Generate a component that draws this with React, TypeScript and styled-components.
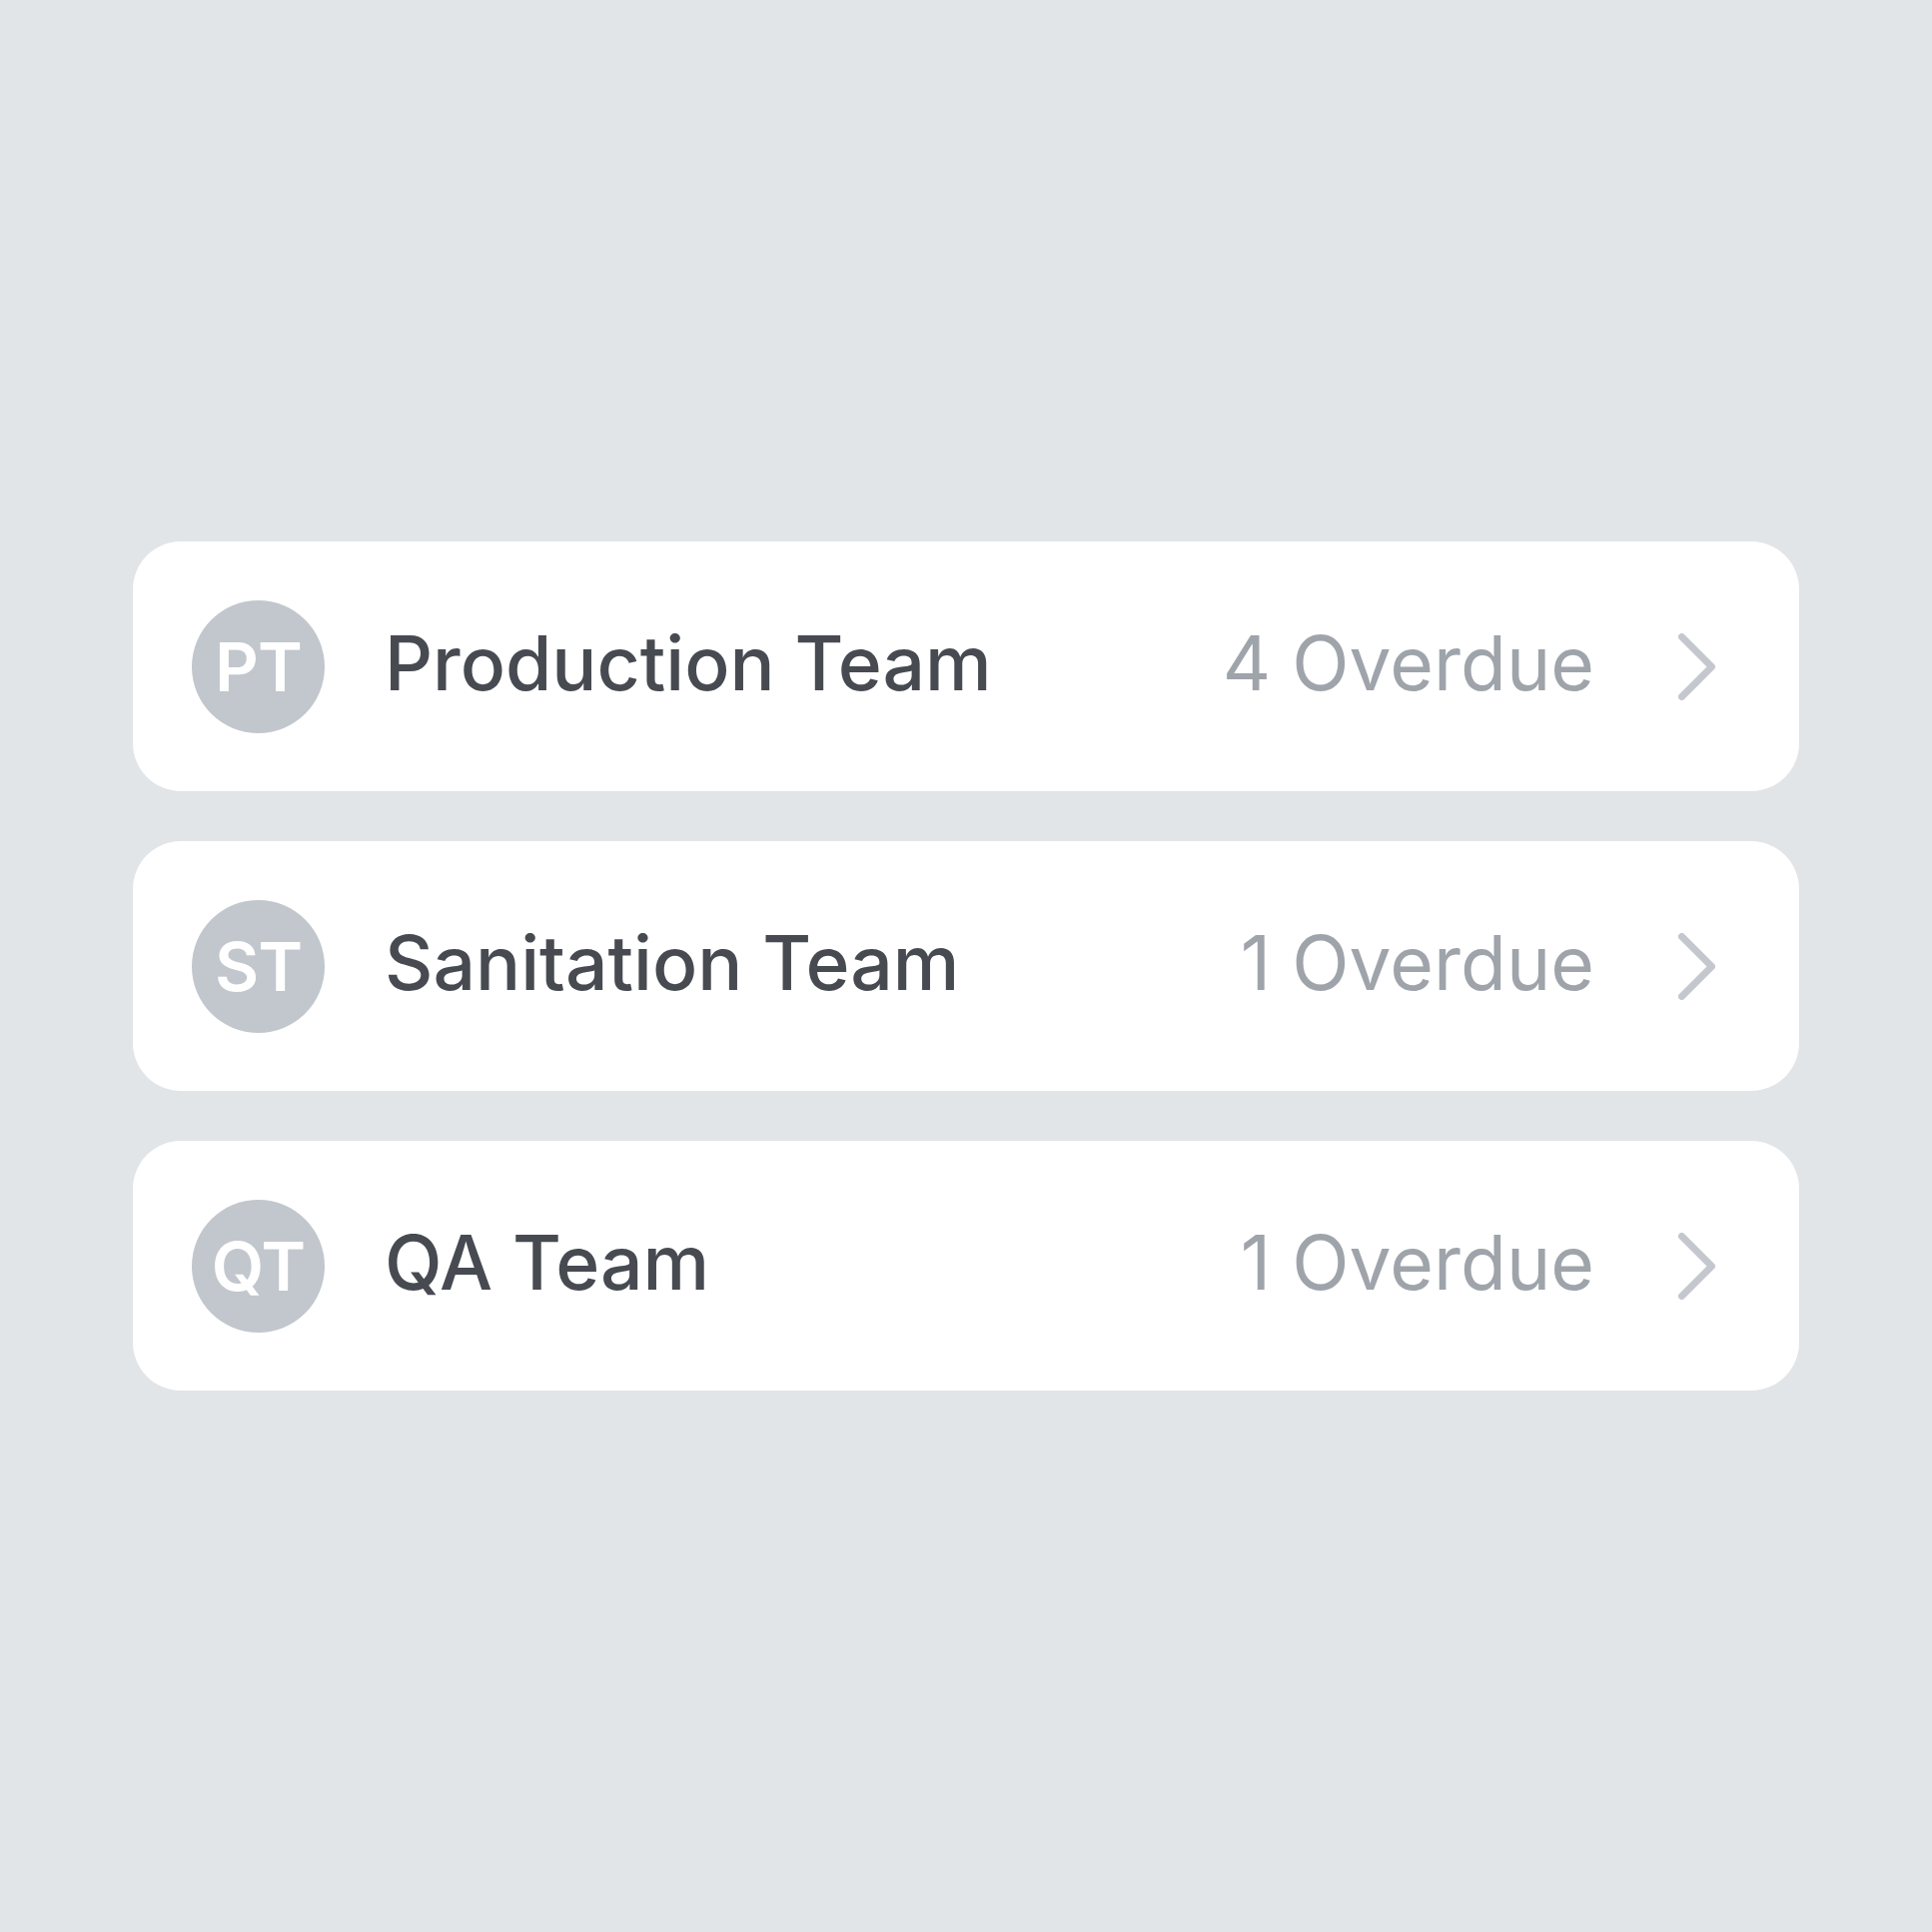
import React from "react";
import styled, { createGlobalStyle } from "styled-components";

const GlobalStyle = createGlobalStyle`
  html, body {
    margin: 0;
    padding: 0;
    background: #e1e5e8;
  }
  body {
    font-family: Inter, "Noto Sans", sans-serif;
  }
`;

type TeamRow = {
  initials: string;
  name: string;
  overdue: number;
};

const teams: TeamRow[] = [
  { initials: "PT", name: "Production Team", overdue: 4 },
  { initials: "ST", name: "Sanitation Team", overdue: 1 },
  { initials: "QT", name: "QA Team", overdue: 1 },
];

const Page = styled.div`
  min-height: 1934px;
  box-sizing: border-box;
  padding: 542px 133px 0;
  background: #e1e5e8;
`;

const List = styled.ul`
  list-style: none;
  margin: 0;
  padding: 0;
  display: flex;
  flex-direction: column;
  gap: 50px;
`;

const Card = styled.li`
  height: 250px;
  box-sizing: border-box;
  display: flex;
  align-items: center;
  padding: 0 84px 0 59px;
  background: #ffffff;
  border-radius: 48px;
`;

const Avatar = styled.div`
  flex: none;
  width: 133px;
  height: 133px;
  border-radius: 50%;
  background: #c2c7cd;
  color: #ffffff;
  display: flex;
  align-items: center;
  justify-content: center;
  font-size: 68px;
  font-weight: 600;
  letter-spacing: -1px;
`;

const Name = styled.span`
  margin: 0 0 8px 60px;
  font-size: 75px;
  font-weight: 500;
  color: #474b51;
`;

const Overdue = styled.span`
  margin: 0 0 8px auto;
  font-size: 75px;
  font-weight: 400;
  color: #9fa4ab;
`;

const Chevron = styled.svg`
  flex: none;
  margin-left: 84px;
  width: 37px;
  height: 67px;
`;

const ChevronIcon = () => (
  <Chevron viewBox="0 0 37 67" fill="none">
    <path
      d="M3.5 3.5 L33.5 33.5 L3.5 63.5"
      stroke="#c4c8ce"
      strokeWidth="7"
      strokeLinecap="round"
      strokeLinejoin="round"
    />
  </Chevron>
);

export default function App() {
  return (
    <>
      <GlobalStyle />
      <Page>
        <List>
          {teams.map((t) => (
            <Card key={t.name}>
              <Avatar>{t.initials}</Avatar>
              <Name>{t.name}</Name>
              <Overdue>{t.overdue} Overdue</Overdue>
              <ChevronIcon />
            </Card>
          ))}
        </List>
      </Page>
    </>
  );
}
